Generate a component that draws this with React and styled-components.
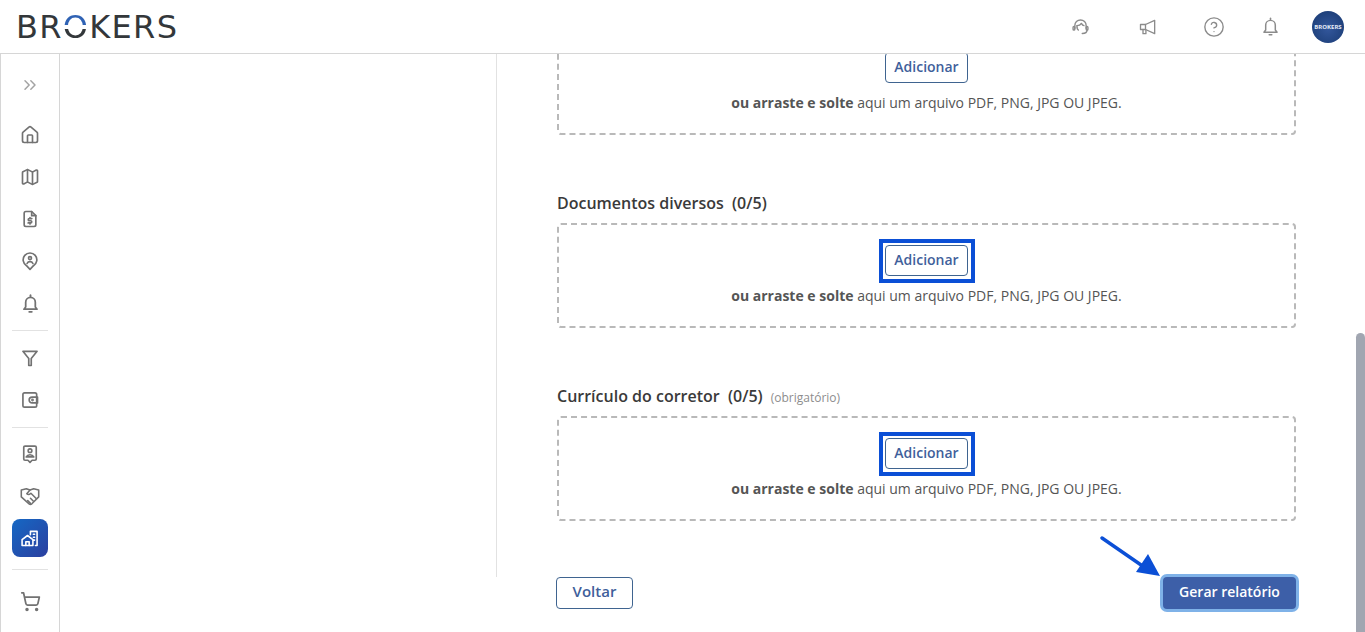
import React, { useLayoutEffect, useRef } from 'react';
import styled, { createGlobalStyle } from 'styled-components';
import { ChevronsRight, CircleHelp, House, Map, ShoppingCart } from 'lucide-react';

const GlobalStyle = createGlobalStyle`
  * { box-sizing: border-box; }
  html, body { margin: 0; height: 100%; overflow: hidden; background: #fff; }
  body { font-family: "Open Sans", "Liberation Sans", sans-serif; color: #3a3a3a; }
`;

const Shell = styled.div`display: flex; flex-direction: column; height: 632px;`;

const Header = styled.header`
  flex: none; height: 54px; display: flex; align-items: center; justify-content: space-between;
  padding: 0 21px 0 16px; border-bottom: 1px solid #d6d6d6; background: #fff;
`;

const Logo = styled.div`
  font-family: "DejaVu Sans", "Liberation Sans", sans-serif;
  font-size: 32px; line-height: 1; font-weight: 400; letter-spacing: 1.3px; color: #33373a;
`;

const LogoO = styled.span`
  background: linear-gradient(#2f62b4 0 44%, transparent 44% 56%, #33373a 56%);
  -webkit-background-clip: text; background-clip: text; color: transparent;
`;

const HeaderIcons = styled.div`display: flex; align-items: center; color: #8b8b8b;`;

const HeaderIcon = styled.span`
  display: flex; justify-content: center; width: 24px; margin-right: ${({ $gap }) => $gap}px;
`;

const Avatar = styled.div`
  width: 32px; height: 32px; border-radius: 50%;
  background: radial-gradient(circle at 50% 55%, #33579c, #17386f);
  display: flex; align-items: center; justify-content: center;
  font-size: 6px; font-weight: 700; color: #e6ecf6;
`;

const Body = styled.div`position: relative; flex: 1; min-height: 0; display: flex;`;

const Sidebar = styled.nav`
  flex: none; width: 60px; display: flex; flex-direction: column; align-items: center;
  padding-top: 12px; border-left: 1px solid #d6d6d6; border-right: 1px solid #d6d6d6; color: #727272;
`;

const Toggle = styled.div`
  width: 36px; height: 38px; margin-bottom: 12px;
  display: flex; align-items: center; justify-content: center; color: #a3a3a3;
`;

const NavItem = styled.div`
  width: 36px; height: 38px; margin-bottom: 4px; border-radius: 8px;
  display: flex; align-items: center; justify-content: center;
  color: ${({ $active }) => ($active ? '#fff' : 'inherit')};
  background: ${({ $active }) => ($active ? 'linear-gradient(135deg, #1568c4, #2b3f9f)' : 'none')};
`;

const NavDivider = styled.hr`
  width: 36px; height: 1px; border: 0; flex: none; background: #e2e2e2;
  margin: ${({ $top }) => $top}px 0 ${({ $bottom }) => $bottom}px;
`;

const Scroller = styled.main`
  flex: 1; min-width: 0; display: flex; align-items: flex-start; overflow-y: auto;
`;

/* headless browser hides real scrollbars, so the thumb is drawn over the edge */
const ScrollThumb = styled.div`
  position: absolute; right: 0; top: 279px; bottom: 0; width: 9px;
  background: #a1a6b1; border-radius: 5px 5px 0 0;
`;

const LeftColumn = styled.div`
  flex: none; width: 437px; height: 1062px; border-right: 1px solid #e2e2e2;
`;

const FormColumn = styled.div`
  flex: 1; min-width: 0; margin: 0 69px 0 60px; padding: 515px 0 23px;
`;

const Section = styled.section`margin-top: 58px;`;

const SectionTitle = styled.div`
  height: 20px; line-height: 20px; margin-bottom: 10px;
  font-size: 16px; font-weight: 600; color: #3a3a3a; white-space: pre;
`;

const Hint = styled.span`
  margin-left: 8px; font-size: 12px; font-weight: 400; color: #8d8d8d;
`;

const DropZone = styled.div`
  height: 105px; padding-top: 20px; border: 2px dashed #b9b9b9; border-radius: 4px;
  display: flex; flex-direction: column; align-items: center;
`;

const AddButton = styled.button`
  position: relative; width: 83px; height: 31px; padding: 0 0 2px; background: #fff;
  border: 1px solid #3f6490; border-radius: 4px;
  font: 600 14px "Open Sans", sans-serif; color: #3f5f9b;

  ${({ $marked }) => $marked && `
    &::after {
      content: ''; position: absolute; inset: -7px -8px -8px -7px;
      border: 4px solid #0b4fd6;
    }
  `}
`;

const DropText = styled.p`
  margin: 10px 0 0; font-size: 14px; line-height: 19px; color: #555;
  b { font-weight: 700; }
`;

const Actions = styled.div`
  position: relative; margin-top: 56px; height: 32px;
  display: flex; justify-content: space-between; align-items: center;
`;

const BackButton = styled.button`
  width: 77px; height: 32px; margin-left: -1px; padding: 0 0 4px; background: #fff;
  border: 1px solid #3f6490; border-radius: 4px;
  font: 600 15px "Open Sans", sans-serif; color: #3f5f9b;
`;

const SubmitButton = styled.button`
  width: 133px; height: 32px; padding: 0 0 4px; border: 0; border-radius: 4px; background: #3d5fa8;
  box-shadow: 0 0 0 3px #7fb2e8;
  font: 600 14px "Open Sans", sans-serif; color: #fff;
`;

const ArrowMark = styled.svg`
  position: absolute; right: 134px; top: -41px; width: 62px; height: 42px;
`;

const Icon = ({ size = 20, width = 2, children }) => (
  <svg width={size} height={size} viewBox="0 0 24 24" fill="none" stroke="currentColor"
    strokeWidth={width} strokeLinecap="round" strokeLinejoin="round">
    {children}
  </svg>
);

const HeadsetIcon = () => (
  <Icon size={21} width={1.6}>
    <path d="M5.500 14v-3a6.500 6.500 0 0 1 13 0v3" />
    <path d="M8 11c2.500 0 4-.8 5-2.500.8 1.500 1.800 2.500 3 2.500" />
    <path d="M8 11v2a4 4 0 0 0 1.500 3" />
    <rect x="3.500" y="12" width="2" height="4" rx="1" />
    <rect x="18.500" y="12" width="2" height="4" rx="1" />
    <path d="M19.500 16c0 2.500-2 4-5.500 4" />
  </Icon>
);

const MegaphoneIcon = () => (
  <Icon size={20} width={1.6}>
    <path d="M3 9h6l11-5v16L9 15H3z" />
    <path d="M9 9v6" />
    <path d="M6 15v5h3.500v-4.500" />
  </Icon>
);

const BellIcon = ({ width = 1.7 }) => (
  <Icon size={21} width={width}>
    <path d="M12 2.500v2" />
    <path d="M6.500 16v-5.500a5.500 5.500 0 0 1 11 0V16l2 2.500h-15z" />
    <path d="M10.500 21.500h3" />
  </Icon>
);

const FileDollarIcon = () => (
  <Icon>
    <path d="M14 3H7a2 2 0 0 0-2 2v14a2 2 0 0 0 2 2h10a2 2 0 0 0 2-2V8z" />
    <path d="M14 3v5h5" />
    <path d="M14.200 11.500h-3a1.300 1.300 0 0 0 0 2.600h1.600a1.300 1.300 0 0 1 0 2.600H9.800M12 10.300v1.200M12 16.700v1.200" />
  </Icon>
);

const PinUserIcon = () => (
  <Icon>
    <path d="M12 22l-4.200-4.400a8.200 8.200 0 1 1 8.400 0z" />
    <circle cx="12" cy="8.500" r="1.800" />
    <path d="M8.500 15a3.800 3.800 0 0 1 7 0" />
  </Icon>
);

const FunnelIcon = () => (
  <Icon>
    <path d="M3.500 4h17l-7 8.500V21h-3v-8.500z" />
  </Icon>
);

const WalletIcon = () => (
  <Icon>
    <rect x="3.500" y="3.500" width="16.500" height="17" rx="2" />
    <path d="M21 8.500h-6.500a3.500 3.500 0 0 0 0 7H21z" />
    <circle cx="15" cy="12" r="0.700" />
  </Icon>
);

const ContactIcon = () => (
  <Icon>
    <path d="M6 2.500h12a1.500 1.500 0 0 1 1.500 1.500v14a1.500 1.500 0 0 1-1.500 1.500h-3.500l-2.500 2.500-2.500-2.500H6A1.500 1.500 0 0 1 4.500 18V4A1.500 1.500 0 0 1 6 2.500z" />
    <circle cx="12" cy="8" r="2.200" />
    <path d="M7.500 15.500c1-2 2.600-2.600 4.500-2.600s3.500.6 4.500 2.600z" />
  </Icon>
);

const HandshakeIcon = () => (
  <Icon size={22} width={1.7}>
    <path d="M2.500 5.500L8 4l4 1.500L16 4l5.500 1.500V13L14 20.500c-1 .8-2 .8-3 0L2.500 13z" />
    <path d="M12 5.500L8.500 9.500c1.500 1.500 3 1 4.500-.5l5.500 5.500" />
    <path d="M15.500 17.500l-3-3M12.500 20l-3-3" />
  </Icon>
);

const HomeBuildingIcon = () => (
  <Icon size={20} width={1.9}>
    <path d="M2.500 14l6.500-5 6.500 5v7h-13z" />
    <path d="M7 21v-4.500h4V21" />
    <path d="M12.500 8V4h8v17h-2" />
    <path d="M16 7.500h1.500M16 11h1.500M16 14.500h1.500" />
  </Icon>
);

const sections = [
  { title: 'Documentos diversos  (0/5)' },
  { title: 'Currículo do corretor  (0/5)', hint: '(obrigatório)' },
];

const Drop = ({ marked }) => (
  <DropZone>
    <AddButton $marked={marked}>Adicionar</AddButton>
    <DropText><b>ou arraste e solte</b> aqui um arquivo PDF, PNG, JPG OU JPEG.</DropText>
  </DropZone>
);

export default function App() {
  const scroller = useRef(null);

  useLayoutEffect(() => {
    scroller.current.scrollTop = scroller.current.scrollHeight;
  }, []);

  return (
    <Shell>
      <GlobalStyle />
      <Header>
        <Logo>BR<LogoO>O</LogoO>KERS</Logo>
        <HeaderIcons>
          <HeaderIcon $gap={44}><HeadsetIcon /></HeaderIcon>
          <HeaderIcon $gap={42}><MegaphoneIcon /></HeaderIcon>
          <HeaderIcon $gap={32}><CircleHelp size={22} strokeWidth={1.5} /></HeaderIcon>
          <HeaderIcon $gap={30}><BellIcon /></HeaderIcon>
          <Avatar>BROKERS</Avatar>
        </HeaderIcons>
      </Header>
      <Body>
        <Sidebar>
          <Toggle><ChevronsRight size={20} strokeWidth={1.8} /></Toggle>
          <NavItem><House size={20} strokeWidth={2} /></NavItem>
          <NavItem><Map size={20} strokeWidth={2} /></NavItem>
          <NavItem><FileDollarIcon /></NavItem>
          <NavItem><PinUserIcon /></NavItem>
          <NavItem><BellIcon width={2} /></NavItem>
          <NavDivider $top={4} $bottom={8} />
          <NavItem><FunnelIcon /></NavItem>
          <NavItem><WalletIcon /></NavItem>
          <NavDivider $top={4} $bottom={7} />
          <NavItem><ContactIcon /></NavItem>
          <NavItem><HandshakeIcon /></NavItem>
          <NavItem $active><HomeBuildingIcon /></NavItem>
          <NavDivider $top={8} $bottom={12} />
          <NavItem><ShoppingCart size={21} strokeWidth={2} /></NavItem>
        </Sidebar>
        <Scroller ref={scroller}>
          <LeftColumn />
          <FormColumn>
            <Drop />
            {sections.map((s) => (
              <Section key={s.title}>
                <SectionTitle>
                  {s.title}
                  {s.hint && <Hint>{s.hint}</Hint>}
                </SectionTitle>
                <Drop marked />
              </Section>
            ))}
            <Actions>
              <BackButton>Voltar</BackButton>
              <SubmitButton>Gerar relatório</SubmitButton>
              <ArrowMark viewBox="0 0 62 42">
                <path d="M2 2 L44 31" stroke="#0b4fd6" strokeWidth="3.4" strokeLinecap="round" />
                <polygon points="60,40 36,36 48,18" fill="#0b4fd6" />
              </ArrowMark>
            </Actions>
          </FormColumn>
        </Scroller>
        <ScrollThumb />
      </Body>
    </Shell>
  );
}
